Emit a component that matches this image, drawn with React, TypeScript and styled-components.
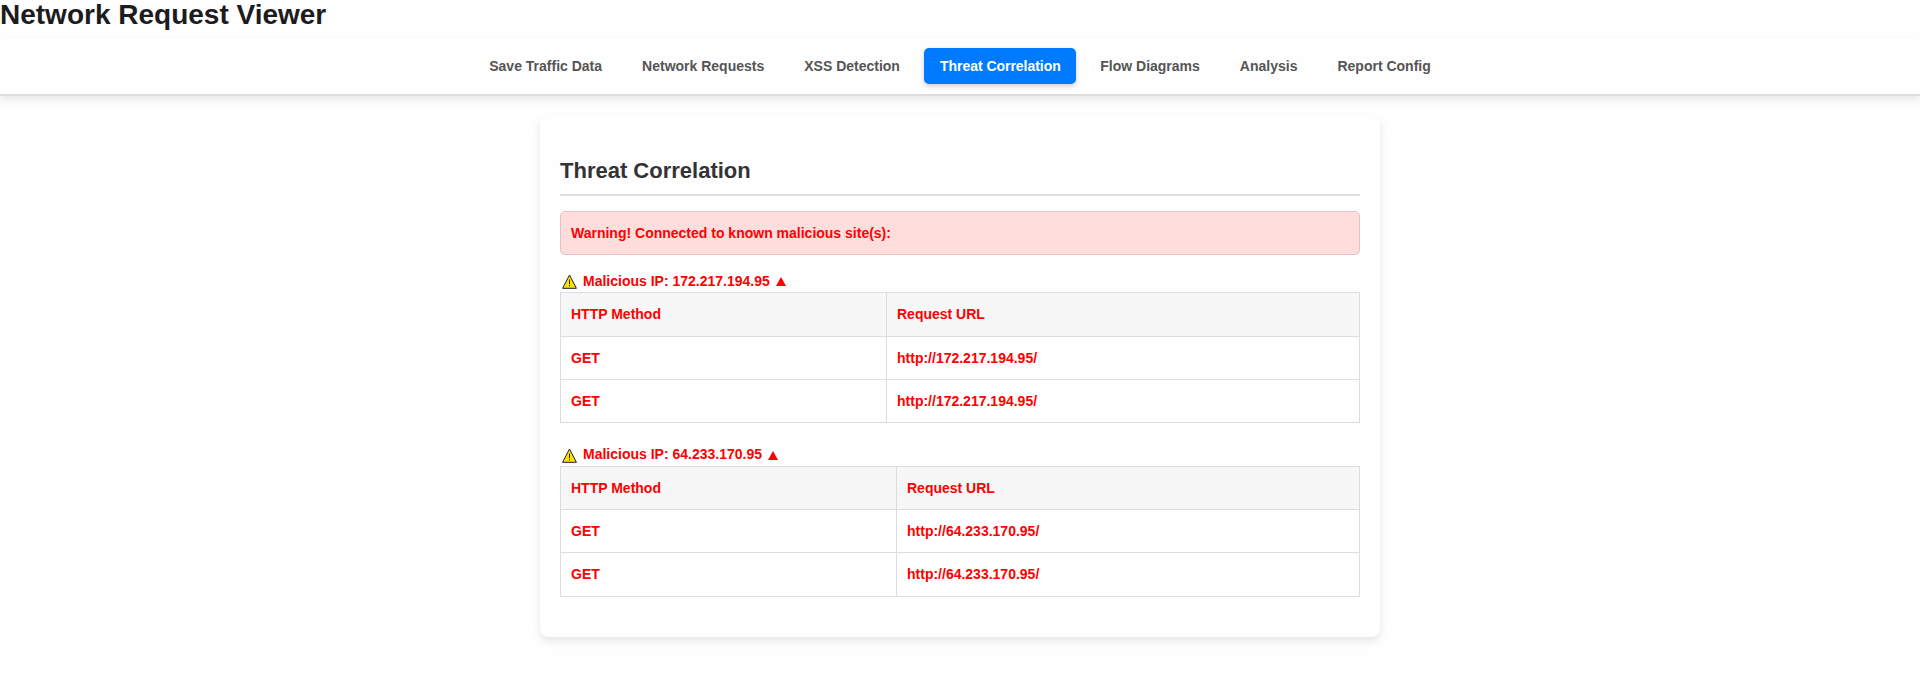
import React from 'react';
import styled, { createGlobalStyle, css } from 'styled-components';

const GlobalStyle = createGlobalStyle`
  *, *::before, *::after { box-sizing: border-box; }
  body {
    margin: 0;
    background: #fefefe;
    color: #333;
    font-family: Arial, 'Liberation Sans', sans-serif;
    font-size: 14px;
    line-height: 1.6;
  }
`;

const PageTitle = styled.h1`
  margin: 0;
  padding: 1px 0 8.6px;
  color: #1c1c1e;
  font-size: 28px;
  line-height: 28px;
`;

const NavBar = styled.nav`
  display: flex;
  justify-content: center;
  gap: 8px;
  padding: 10px 0;
  background: #fefefe;
  border-bottom: 2px solid #ddd;
  box-shadow: 0 4px 8px rgba(0, 0, 0, 0.09);
`;

const NavButton = styled.button<{ $active?: boolean }>`
  padding: 10px 16px;
  border: 0;
  border-radius: 5px;
  background: transparent;
  color: #555;
  font: bold 14px/16px Arial, 'Liberation Sans', sans-serif;
  ${({ $active }) =>
    $active &&
    css`
      padding: 10px 15.5px 10px 16px;
      background: #007bff;
      color: #fff;
      letter-spacing: -0.03px;
      box-shadow: 0 2px 5px rgba(0, 0, 0, 0.2);
    `}
`;

const Card = styled.main`
  width: 840px;
  margin: 20px auto;
  padding: 20px;
  background: #fefefe;
  border-radius: 8px;
  box-shadow: 0 4px 8px rgba(0, 0, 0, 0.1);
`;

const SectionTitle = styled.h2`
  margin: 17.4px 0 15px;
  padding-bottom: 5.7px;
  border-bottom: 2px solid #ddd;
  color: #333;
  font-size: 22px;
  line-height: 35px;
`;

const WarningBox = styled.div`
  padding: 10px;
  margin-bottom: 14.7px;
  border: 1px solid #e6c3c3;
  border-radius: 5px;
  background: #fdd;
  color: #f00;
  font-weight: bold;
`;

const ThreatGroup = styled.section`
  margin-bottom: 20px;
  color: #f00;
  font-weight: bold;
`;

const ThreatHeading = styled.div`
  display: flex;
  align-items: center;
  height: 22.4px;
  padding-left: 2px;
`;

const WarningIcon = styled.svg`
  width: 15px;
  height: 15px;
  margin: 2px 6px 0 0;
`;

const Toggle = styled.svg`
  width: 10px;
  height: 9px;
  margin: 1px 0 0 6px;
`;

const Table = styled.table`
  width: 100%;
  border-collapse: collapse;
`;

const cell = css`
  padding: 10px;
  border: 1px solid #ddd;
  text-align: left;
`;

const HeadCell = styled.th<{ $width?: number }>`
  ${cell}
  background: #f7f7f7;
  ${({ $width }) => $width && `width: ${$width}px;`}
`;

const Cell = styled.td`
  ${cell}
`;

const tabs = [
  'Save Traffic Data',
  'Network Requests',
  'XSS Detection',
  'Threat Correlation',
  'Flow Diagrams',
  'Analysis',
  'Report Config',
];

const threats = [
  { ip: '172.217.194.95', methodWidth: 326 },
  { ip: '64.233.170.95', methodWidth: 336 },
];

export default function App() {
  return (
    <>
      <GlobalStyle />
      <PageTitle>Network Request Viewer</PageTitle>
      <NavBar>
        {tabs.map((tab) => (
          <NavButton key={tab} $active={tab === 'Threat Correlation'}>
            {tab}
          </NavButton>
        ))}
      </NavBar>
      <Card>
        <SectionTitle>Threat Correlation</SectionTitle>
        <WarningBox>Warning! Connected to known malicious site(s):</WarningBox>
        {threats.map(({ ip, methodWidth }) => (
          <ThreatGroup key={ip}>
            <ThreatHeading>
              <WarningIcon viewBox="0 0 15 15">
                <path d="M7.5 1 14.4 14.3H.6Z" fill="#ffe000" stroke="#222" strokeWidth="1" />
                <path d="M7.5 5.5v4.8M7.5 11.2v1.2" stroke="#222" strokeWidth="1" />
              </WarningIcon>
              Malicious IP: {ip}
              <Toggle viewBox="0 0 10 9">
                <path d="M5 0 10 9H0Z" fill="#f00" />
              </Toggle>
            </ThreatHeading>
            <Table>
              <thead>
                <tr>
                  <HeadCell $width={methodWidth}>HTTP Method</HeadCell>
                  <HeadCell>Request URL</HeadCell>
                </tr>
              </thead>
              <tbody>
                {[0, 1].map((row) => (
                  <tr key={row}>
                    <Cell>GET</Cell>
                    <Cell>http://{ip}/</Cell>
                  </tr>
                ))}
              </tbody>
            </Table>
          </ThreatGroup>
        ))}
      </Card>
    </>
  );
}
